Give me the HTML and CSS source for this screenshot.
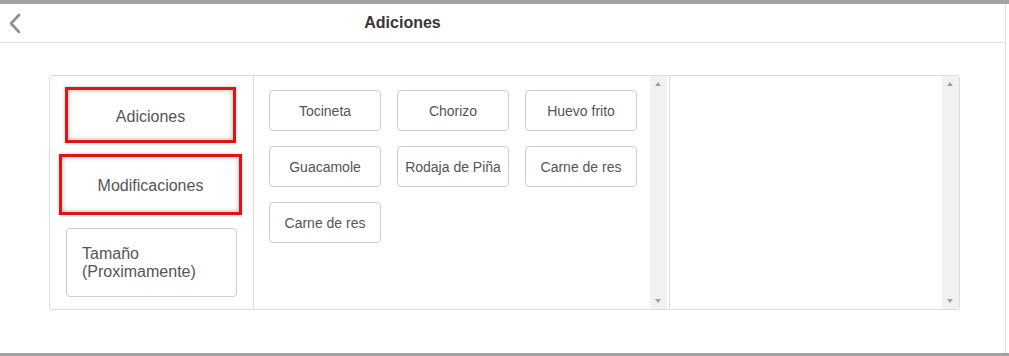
FILE: index.html
```html
<!DOCTYPE html>
<html lang="es">
<head>
  <meta charset="UTF-8">
  <meta name="viewport" content="width=device-width, initial-scale=1.0">
  <title>Adiciones</title>
  <link rel="stylesheet" href="styles.css">
</head>

<body>
  <!-- Modal -->
  <div class="modal">
    <div class="modal-header">
      <a class="back" href="#">
        <svg width="20" height="38" viewBox="0 0 20 38">
          <polyline points="11,11 3,19.5 11,28" fill="none" stroke="#8f8f8f" stroke-width="2.6" stroke-linecap="round" stroke-linejoin="round"/>
        </svg>
      </a>
      <h1 class="modal-title">Adiciones</h1>
    </div>

    <div class="modal-body">
      <div class="panel">
        <!-- Categories -->
        <div class="categories">
          <button class="cat-btn marked first">Adiciones</button>
          <button class="cat-btn marked second">Modificaciones</button>
          <button class="cat-btn soon">Tamaño<br>(Proximamente)</button>
        </div>

        <!-- Items -->
        <div class="items-col">
          <div class="items">
            <button class="item-btn">Tocineta</button>
            <button class="item-btn">Chorizo</button>
            <button class="item-btn">Huevo frito</button>
            <button class="item-btn">Guacamole</button>
            <button class="item-btn">Rodaja de Piña</button>
            <button class="item-btn">Carne de res</button>
            <button class="item-btn">Carne de res</button>
          </div>
          <div class="scrollbar"><span class="arrow up"></span><span class="arrow down"></span></div>
        </div>

        <!-- Selected -->
        <div class="selected-col">
          <div class="selected"></div>
          <div class="scrollbar"><span class="arrow up"></span><span class="arrow down"></span></div>
        </div>
      </div>
    </div>
  </div>
</body>
</html>
```

FILE: styles.css
```css
body, html
{
  margin: 0;
  padding: 0;
  background-color: #a2a2a2;
  font-family: "Liberation Sans", Arial, sans-serif;
  overflow: hidden;
}

/* Modal */
.modal
{
  margin-top: 4px;
  width: 1009px;
  height: 349px;
  background: linear-gradient(to right, white 1005px, #e0e0e0 1005px, #e0e0e0 1006px, white 1006px);
}

.modal-header
{
  display: flex;
  align-items: center;
  width: 1005px;
  box-sizing: border-box;
  height: 39px;
  padding-left: 8px;
  padding-right: 228px;
  border-bottom: 1px solid #e3e3e3;
}

.back
{
  display: block;
  width: 20px;
  height: 38px;
}

.modal-title
{
  flex: 1;
  margin: 0;
  text-align: center;
  font-size: 16px;
  font-weight: bold;
  color: #373737;
}

.modal-body
{
  padding: 32px 0 0 49px;
}

/* Panel with three columns */
.panel
{
  display: grid;
  grid-template-columns: 204px 416px 1fr;
  width: 911px;
  height: 235px;
  box-sizing: border-box;
  border: 1px solid #dcdcdc;
  border-radius: 3px;
}

.categories
{
  display: flex;
  flex-direction: column;
  align-items: flex-start;
  border-right: 1px solid #dcdcdc;
  padding-top: 11px;
}

.cat-btn
{
  font-family: inherit;
  font-size: 16px;
  color: #555;
  background: white;
  border: 1px solid #ccc;
  border-radius: 4px;
  cursor: pointer;
}

.cat-btn.marked
{
  border: 3px solid #e01414;
  border-radius: 0;
  box-shadow: inset 0 0 5px rgba(0, 0, 0, 0.35), 0 0 3px rgba(0, 0, 0, 0.25);
}

.cat-btn.first
{
  width: 171px;
  height: 56px;
  margin-left: 15px;
  padding-top: 5px;
}

.cat-btn.second
{
  width: 183px;
  height: 61px;
  margin-left: 9px;
  margin-top: 11px;
  padding-top: 3px;
}

.cat-btn.soon
{
  width: 171px;
  height: 69px;
  margin-left: 16px;
  margin-top: 13px;
  text-align: left;
  padding-left: 15px;
  line-height: 18px;
}

/* Items column */
.items-col, .selected-col
{
  display: flex;
  border-right: 1px solid #dcdcdc;
}

.selected-col
{
  border-right: none;
}

.items
{
  flex: 1;
  display: grid;
  grid-template-columns: repeat(3, 112px);
  grid-auto-rows: 41px;
  gap: 15px 16px;
  padding: 14px 0 0 15px;
  align-content: start;
}

.item-btn
{
  font-family: inherit;
  font-size: 14px;
  color: #555;
  background: white;
  border: 1px solid #ccc;
  border-radius: 4px;
  padding: 0;
  cursor: pointer;
}

.selected
{
  flex: 1;
}

/* Fake scrollbars */
.scrollbar
{
  position: relative;
  width: 17px;
  margin-right: 2px;
  background: #f1f1f1;
}

.selected-col .scrollbar
{
  margin-right: 0;
}

.arrow
{
  position: absolute;
  left: 5px;
  width: 0;
  height: 0;
  border-left: 3.5px solid transparent;
  border-right: 3.5px solid transparent;
}

.arrow.up
{
  top: 6px;
  border-bottom: 4px solid #a3a3a3;
}

.arrow.down
{
  bottom: 6px;
  border-top: 4px solid #a3a3a3;
}
```
